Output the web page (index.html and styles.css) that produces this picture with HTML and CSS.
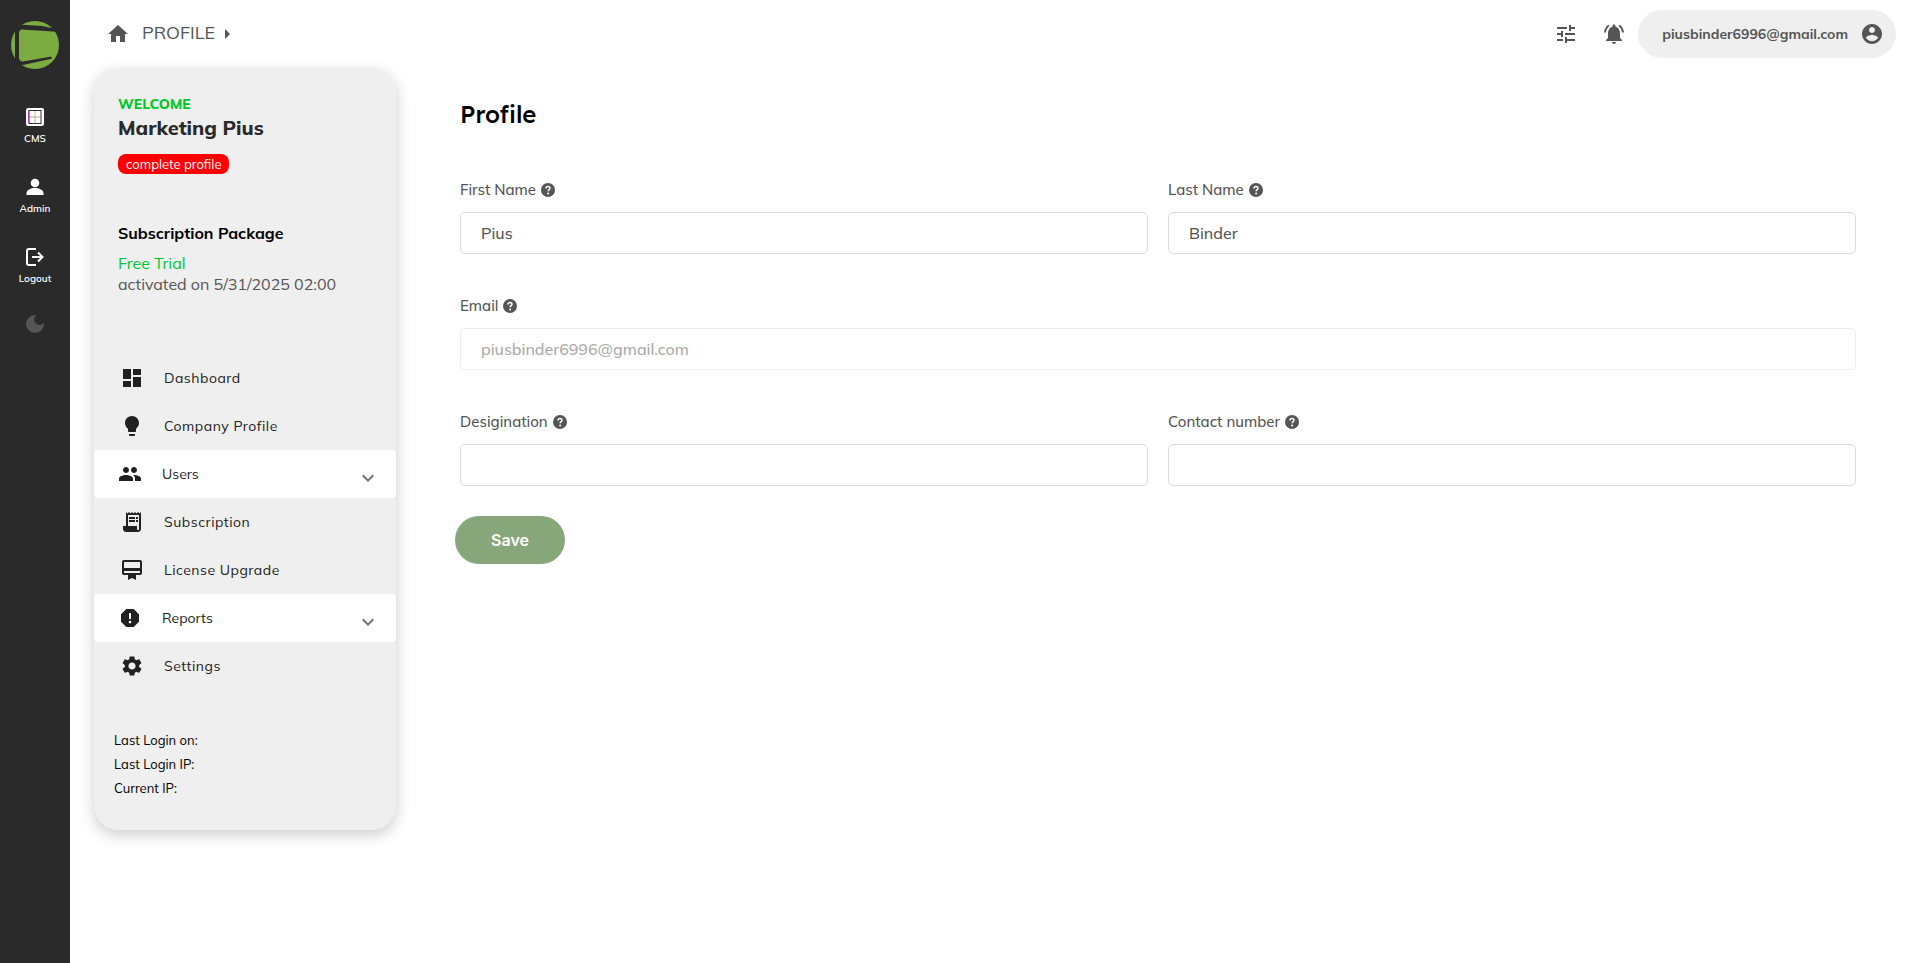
FILE: index.html
```html
<!DOCTYPE html>
<html lang="en">
<head>
<meta charset="utf-8">
<meta name="viewport" content="width=device-width, initial-scale=1">
<title>Profile</title>
<link rel="stylesheet" href="styles.css">
</head>
<body>
<svg class="sprite" aria-hidden="true">
  <symbol id="help" viewBox="0 0 14 14">
    <circle cx="7" cy="7" r="7" fill="currentColor"/>
    <path d="M5 5.4C5 2.9 9 3 9 5.2C9 6.7 7.1 6.6 7.1 8.3" fill="none" stroke="#fff" stroke-width="1.5"/>
    <circle cx="7.1" cy="10.4" r="1" fill="#fff"/>
  </symbol>
  <symbol id="chevron" viewBox="0 0 24 24"><path d="M7.41 8.59 12 13.17l4.59-4.58L18 10l-6 6-6-6z"/></symbol>
</svg>
<div class="app">
  <nav class="rail" aria-label="Main">
    <a class="logo" href="#" aria-label="Home">
      <svg viewBox="0 0 48 48">
        <circle cx="24" cy="24" r="24" fill="#7cab41"/>
        <path d="M4 0h4v48H4z" fill="#2a2a2a"/>
        <path d="M6 4l5-.2 20 1.200 11 2.200 4 3.600-35-2.200q-2-.4-2.400 1.800L6 12z" fill="#2a2a2a"/>
        <path d="M6 36l2.400 2q.6 2.800 3.600 2.600l27-4.800q2-.2 2 1l-.4 1L12 44l-6-1z" fill="#2a2a2a"/>
      </svg>
    </a>
    <a class="rail-item" href="#">
      <svg class="i18" viewBox="0 0 18 18"><rect width="18" height="18" rx="2" fill="#fff"/><path d="M9 3v12" stroke="#d9b27c"/><path d="M3 9h12" stroke="#aaa"/><rect x="3" y="2.500" width="12" height="13" fill="none" stroke="#333"/><path d="M2.500 3v12" stroke="#b040b0"/></svg>
      <span>CMS</span>
    </a>
    <a class="rail-item" href="#">
      <svg class="i18" viewBox="0 0 18 18"><circle cx="9" cy="5" r="4.300"/><path d="M.5 17v-2c0-3 4.500-5 8.500-5s8.500 2 8.500 5v2z"/></svg>
      <span>Admin</span>
    </a>
    <a class="rail-item" href="#">
      <svg class="i18" viewBox="0 0 18 18"><path d="M10 1H3Q1 1 1 3v12q0 2 2 2h7M6 9h10M12 4.500 16.500 9 12 13.500" fill="none" stroke="#fff" stroke-width="2"/></svg>
      <span>Logout</span>
    </a>
    <button class="rail-item theme" type="button" aria-label="Dark mode">
      <svg class="i18" viewBox="0 0 18 18"><path d="M9 0a9 9 0 1 0 9 9c0-.46-.04-.92-.1-1.360A5.400 5.400 0 1 1 10.360.1C9.920.04 9.460 0 9 0z"/></svg>
    </button>
  </nav>
  <div class="page">
    <header class="topbar">
      <nav class="crumbs" aria-label="Breadcrumb">
        <a href="#" aria-label="Home"><svg class="i24" viewBox="0 0 24 24"><path d="M10 20v-6h4v6h5v-8h3L12 3 2 12h3v8z"/></svg></a>
        <a class="crumb" href="#">PROFILE</a>
        <svg class="caret" viewBox="0 0 6 10"><path d="M0 0l5 5-5 5z"/></svg>
      </nav>
      <div class="tools">
        <button type="button" aria-label="Preferences"><svg class="i24" viewBox="0 0 24 24"><path d="M3 17v2h6v-2H3zM3 5v2h10V5H3zm10 16v-2h8v-2h-8v-2h-2v6h2zM7 9v2H3v2h4v2h2V9H7zm14 4v-2H11v2h10zm-6-4h2V7h4V5h-4V3h-2v6z"/></svg></button>
        <button type="button" aria-label="Notifications"><svg class="i24" viewBox="0 0 24 24"><path d="M7.580 4.080 6.150 2.650C3.750 4.480 2.170 7.300 2.030 10.500h2c.15-2.650 1.510-4.970 3.550-6.420zm12.390 6.420h2c-.15-3.200-1.730-6.020-4.120-7.850l-1.420 1.430c2.020 1.450 3.390 3.770 3.540 6.420zM18 11c0-3.070-1.640-5.640-4.500-6.320V4c0-.83-.67-1.500-1.500-1.500s-1.500.67-1.500 1.500v.68C7.630 5.360 6 7.920 6 11v5l-2 2v1h16v-1l-2-2v-5zm-6 11c1.100 0 2-.9 2-2h-4c0 1.100.9 2 2 2z"/></svg></button>
        <button class="account" type="button">piusbinder6996@gmail.com
          <svg class="i24" viewBox="0 0 24 24"><path d="M12 2C6.480 2 2 6.480 2 12s4.480 10 10 10 10-4.480 10-10S17.520 2 12 2zm0 3c1.660 0 3 1.340 3 3s-1.340 3-3 3-3-1.340-3-3 1.340-3 3-3zm0 14.200c-2.500 0-4.710-1.280-6-3.220.03-1.990 4-3.080 6-3.080 1.990 0 5.970 1.090 6 3.080-1.290 1.940-3.500 3.220-6 3.220z"/></svg>
        </button>
      </div>
    </header>
    <div class="body">
      <aside class="card">
        <div class="intro">
          <p class="welcome">WELCOME</p>
          <p class="user">Marketing Pius</p>
          <a class="badge" href="#">complete profile</a>
          <p class="plan-title">Subscription Package</p>
          <p class="plan">Free Trial</p>
          <p class="since">activated on 5/31/2025 02:00</p>
        </div>
        <nav class="menu" aria-label="Account">
          <a class="item" href="#"><svg class="i24" viewBox="0 0 24 24"><path d="M3 13h8V3H3v10zm0 8h8v-6H3v6zm10 0h8V11h-8v10zm0-18v6h8V3h-8z"/></svg>Dashboard</a>
          <a class="item" href="#"><svg class="i24" viewBox="0 0 24 24"><path d="M9 21c0 .5.400 1 1 1h4c.6 0 1-.5 1-1v-1H9v1zm3-19C8.100 2 5 5.100 5 9c0 2.400 1.200 4.500 3 5.700V17c0 .5.400 1 1 1h6c.6 0 1-.5 1-1v-2.300c1.800-1.300 3-3.400 3-5.700 0-3.900-3.100-7-7-7z"/></svg>Company Profile</a>
          <button class="item group" type="button" aria-expanded="false"><svg class="i24" viewBox="0 0 24 24"><path d="M16 11c1.660 0 2.990-1.340 2.990-3S17.660 5 16 5s-3 1.340-3 3 1.340 3 3 3zm-8 0c1.660 0 2.990-1.340 2.990-3S9.660 5 8 5 5 6.340 5 8s1.340 3 3 3zm0 2c-2.330 0-7 1.170-7 3.500V19h14v-2.500c0-2.330-4.670-3.500-7-3.500zm8 0c-.29 0-.62.020-.97.050 1.160.84 1.970 1.970 1.970 3.450V19h6v-2.500c0-2.330-4.670-3.500-7-3.500z"/></svg>Users<svg class="chevron"><use href="#chevron"/></svg></button>
          <a class="item" href="#"><svg class="i24" viewBox="0 0 24 24"><path d="M19.500 3.500 18 2l-1.500 1.500L15 2l-1.500 1.500L12 2l-1.500 1.500L9 2 7.500 3.500 6 2v14H3v3c0 1.660 1.340 3 3 3h12c1.660 0 3-1.340 3-3V2l-1.500 1.500zM19 19c0 .55-.45 1-1 1s-1-.45-1-1v-3H8V5h11v14zM9 7h6v2H9zm7 0h2v2h-2zm-7 3h6v2H9zm7 0h2v2h-2z"/></svg>Subscription</a>
          <a class="item" href="#"><svg class="i24" viewBox="0 0 24 24"><path d="M20 2H4c-1.110 0-2 .89-2 2v11c0 1.110.89 2 2 2h4v5l4-2 4 2v-5h4c1.110 0 2-.89 2-2V4c0-1.110-.89-2-2-2zm0 13H4v-2h16v2zm0-5H4V4h16v6z"/></svg>License Upgrade</a>
          <button class="item group" type="button" aria-expanded="false"><svg class="i24" viewBox="0 0 24 24"><path d="M15.730 3H8.270L3 8.270v7.460L8.270 21h7.460L21 15.730V8.270L15.730 3zM12 17.300c-.72 0-1.300-.58-1.300-1.300s.58-1.300 1.300-1.300 1.300.58 1.300 1.300-.58 1.300-1.300 1.300zm1-4.300h-2V7h2v6z"/></svg>Reports<svg class="chevron"><use href="#chevron"/></svg></button>
          <a class="item" href="#"><svg class="i24" viewBox="0 0 24 24"><path d="M19.140 12.940c.04-.3.060-.61.060-.94 0-.32-.02-.64-.07-.94l2.030-1.580c.18-.14.230-.41.120-.61l-1.920-3.320c-.12-.22-.37-.29-.59-.22l-2.390.96c-.5-.38-1.030-.7-1.620-.94l-.36-2.540c-.04-.24-.24-.41-.48-.41h-3.840c-.24 0-.43.170-.47.410l-.36 2.540c-.59.240-1.130.57-1.620.94l-2.390-.96c-.22-.08-.47 0-.59.220L2.740 8.870c-.12.210-.08.470.12.610l2.030 1.580c-.05.300-.09.630-.09.940s.02.640.070.940l-2.030 1.580c-.18.140-.23.410-.12.610l1.920 3.320c.12.220.37.290.59.220l2.390-.96c.5.380 1.030.7 1.620.94l.36 2.540c.05.240.24.410.48.410h3.840c.24 0 .44-.17.470-.41l.36-2.540c.59-.24 1.130-.56 1.620-.94l2.390.96c.22.080.47 0 .59-.22l1.920-3.320c.12-.22.070-.47-.12-.61l-2.010-1.580zM12 15.600c-1.980 0-3.600-1.620-3.600-3.600s1.620-3.600 3.600-3.600 3.600 1.620 3.600 3.600-1.620 3.600-3.600 3.600z"/></svg>Settings</a>
        </nav>
        <div class="login">
          <p>Last Login on:</p>
          <p>Last Login IP:</p>
          <p>Current IP:</p>
        </div>
      </aside>
      <main class="content">
        <h1>Profile</h1>
        <form class="form">
          <div class="field">
            <label for="first">First Name <svg class="help"><use href="#help"/></svg></label>
            <input id="first" type="text" value="Pius">
          </div>
          <div class="field">
            <label for="last">Last Name <svg class="help"><use href="#help"/></svg></label>
            <input id="last" type="text" value="Binder">
          </div>
          <div class="field wide">
            <label for="email">Email <svg class="help"><use href="#help"/></svg></label>
            <input id="email" type="email" value="piusbinder6996@gmail.com" disabled>
          </div>
          <div class="field">
            <label for="role">Desigination <svg class="help"><use href="#help"/></svg></label>
            <input id="role" type="text">
          </div>
          <div class="field">
            <label for="phone">Contact number <svg class="help"><use href="#help"/></svg></label>
            <input id="phone" type="tel">
          </div>
          <button class="save" type="button">Save</button>
        </form>
      </main>
    </div>
  </div>
</div>
</body>
</html>
```

FILE: styles.css
```css
* { box-sizing: border-box; }
body {
  margin: 0;
  background: #fff;
  color: #212121;
  font-family: Mulish, Muli, "Open Sans", sans-serif;
}
p, h1 { margin: 0; }
a { color: inherit; text-decoration: none; }
button { border: 0; padding: 0; background: none; color: inherit; font: inherit; cursor: pointer; }
svg { display: block; flex: none; fill: currentColor; }
.sprite { position: absolute; width: 0; height: 0; }
.i18 { width: 18px; height: 18px; }
.i24 { width: 24px; height: 24px; }

.app { display: flex; min-height: 100vh; }

.rail {
  flex: none;
  display: flex;
  flex-direction: column;
  align-items: center;
  width: 70px;
  padding-top: 21px;
  background: #2a2a2a;
  color: #fff;
}
.logo { margin-bottom: 39px; }
.logo svg { width: 48px; height: 48px; }
.rail-item {
  display: flex;
  flex-direction: column;
  align-items: center;
  gap: 6px;
  height: 70px;
  font-size: 10px;
  font-weight: 600;
  line-height: 14px;
}
.theme { margin-top: -3px; color: #555; }

.page { flex: 1; min-width: 0; }
.topbar {
  display: flex;
  align-items: center;
  justify-content: space-between;
  height: 68px;
  padding: 0 24px 0 36px;
  color: #555;
}
.crumbs { display: flex; align-items: center; }
.crumb { margin: 0 10px 0 12px; font-size: 18px; line-height: 24px; padding-bottom: 2px; }
.caret { width: 6px; height: 10px; }
.tools { display: flex; align-items: center; gap: 24px; }
.account {
  display: flex;
  align-items: center;
  gap: 12px;
  height: 48px;
  margin-left: -12px;
  padding: 0 12px 0 24px;
  border-radius: 24px;
  background: #efefef;
  font-size: 14px;
  font-weight: 700;
}

.body { display: flex; align-items: flex-start; padding: 0 64px 0 24px; }
.card {
  flex: none;
  width: 302px;
  padding-bottom: 30px;
  border-radius: 24px;
  background: #efefef;
  box-shadow: 0 5px 15px rgba(0, 0, 0, .2);
}
.intro { padding: 24px 24px 0; }
.welcome { color: #00c82b; font-size: 14px; font-weight: 800; line-height: 24px; }
.user { color: #2a2a2a; font-size: 20px; font-weight: 800; line-height: 24px; }
.badge {
  display: inline-block;
  margin-top: 14px;
  padding: 0 8px;
  border-radius: 8px;
  background: #f00;
  color: #fff;
  font-size: 13px;
  line-height: 20px;
  vertical-align: top;
}
.plan-title { margin: 47px 0 8px; color: #000; font-size: 16px; font-weight: 700; line-height: 24px; }
.plan, .since { font-size: 16px; line-height: 21px; }
.plan { color: #00c82b; }
.since { color: #555; }

.menu { margin-top: 59px; }
.item {
  display: flex;
  align-items: center;
  gap: 20px;
  width: 100%;
  height: 48px;
  padding: 0 16px 0 26px;
  font-size: 14px;
  letter-spacing: 0.5px;
}
.group { padding-left: 24px; border-radius: 4px; background: #fff; letter-spacing: normal; }
.chevron { width: 24px; height: 24px; margin: 8px 0 0 auto; color: #757575; }
.login { margin-top: 38px; padding: 0 20px; color: #000; font-size: 13px; line-height: 24px; }

.content { flex: 1; min-width: 0; padding: 30px 0 0 64px; }
h1 { color: #000; font-family: "Lexend Deca", Lexend, Inter, sans-serif; font-size: 24px; font-weight: 500; line-height: 32px; }
.form { display: grid; grid-template-columns: 1fr 1fr; gap: 34px 20px; margin-top: 42px; }
.field { display: flex; flex-direction: column; gap: 8px; }
.wide { grid-column: 1 / -1; }
label { display: flex; align-items: center; gap: 5px; padding-top: 4px; color: #555; font-size: 15px; font-weight: 500; line-height: 28px; }
.help { width: 14px; height: 14px; }
input {
  width: 100%;
  height: 42px;
  padding: 0 20px;
  border: 1px solid #dcdcdc;
  border-radius: 5px;
  background: #fff;
  color: #555;
  font: inherit;
  font-size: 16px;
  font-weight: 500;
}
input:disabled { border-color: #ededed; color: #aaa; }
.save {
  justify-self: start;
  width: 110px;
  height: 48px;
  margin: -4px 0 0 -5px;
  border-radius: 24px;
  background: #87a77b;
  color: #fff;
  font-family: Inter, sans-serif;
  font-size: 16px;
  font-weight: 600;
}
```
